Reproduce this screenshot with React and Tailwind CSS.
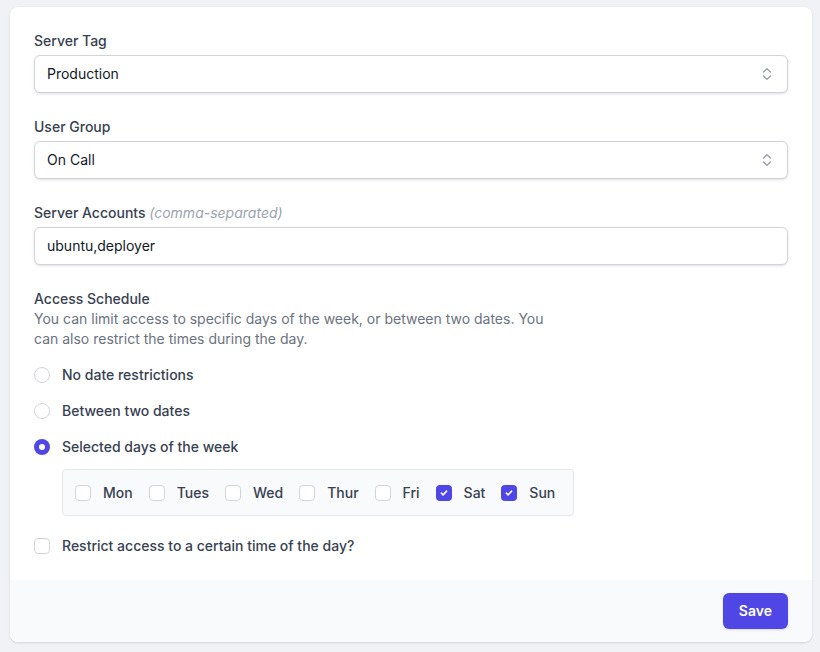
import { useState } from "react";

const DAYS = [
  { name: "Mon", on: false },
  { name: "Tues", on: false },
  { name: "Wed", on: false },
  { name: "Thur", on: false },
  { name: "Fri", on: false },
  { name: "Sat", on: true },
  { name: "Sun", on: true },
];

function UpDown() {
  return (
    <svg viewBox="0 0 20 20" className="h-5 w-5 text-[#9ca3af]" fill="none" stroke="currentColor" strokeWidth="1.5" strokeLinecap="round" strokeLinejoin="round">
      <path d="M6.5 8 10 4.75 13.5 8" />
      <path d="M6.5 12 10 15.25 13.5 12" />
    </svg>
  );
}

function Checkbox({ checked }) {
  return checked ? (
    <span className="flex h-4 w-4 items-center justify-center rounded-[4px] bg-[#4f46e5]">
      <svg viewBox="0 0 16 16" className="h-3 w-3" fill="none" stroke="white" strokeWidth="2" strokeLinecap="round" strokeLinejoin="round">
        <path d="M4.5 8.2 6.8 10.5 11.5 5.5" />
      </svg>
    </span>
  ) : (
    <span className="block h-4 w-4 rounded-[4px] border border-[#d1d5db] bg-white" />
  );
}

function Radio({ checked }) {
  return checked ? (
    <span className="flex h-4 w-4 items-center justify-center rounded-full bg-[#4f46e5]">
      <span className="h-1.5 w-1.5 rounded-full bg-white" />
    </span>
  ) : (
    <span className="block h-4 w-4 rounded-full border border-[#d1d5db] bg-white" />
  );
}

function SelectBox({ value }) {
  return (
    <div className="mt-1 flex h-[38px] items-center justify-between rounded-md border border-[#d1d5db] bg-white pl-3 pr-2.5 shadow-sm">
      <span className="text-sm text-[#111827]">{value}</span>
      <UpDown />
    </div>
  );
}

export default function App() {
  const [mode] = useState("days");

  return (
    <div className="min-h-[652px] bg-[#f1f2f5] pt-[7px] pb-[10px]" style={{ fontFamily: "Inter, 'Noto Sans', sans-serif" }}>
      <div className="ml-[10px] w-[802px] overflow-hidden rounded-lg bg-white shadow">
        <div className="px-6 pt-6 pb-6">
          {/* Server tag */}
          <div>
            <label className="block text-sm font-medium leading-5 text-[#374151]">Server Tag</label>
            <SelectBox value="Production" />
          </div>

          {/* User group */}
          <div className="mt-6">
            <label className="block text-sm font-medium leading-5 text-[#374151]">User Group</label>
            <SelectBox value="On Call" />
          </div>

          {/* Accounts */}
          <div className="mt-6">
            <label className="block text-sm font-medium leading-5 text-[#374151]">
              Server Accounts <span className="font-normal italic text-[#9ca3af]">(comma-separated)</span>
            </label>
            <div className="mt-1 flex h-[38px] items-center rounded-md border border-[#d1d5db] bg-white px-3 shadow-sm">
              <span className="text-sm text-[#111827]">ubuntu,deployer</span>
            </div>
          </div>

          {/* Schedule */}
          <div className="mt-6">
            <div className="text-sm font-medium leading-5 text-[#374151]">Access Schedule</div>
            <p className="w-[520px] text-sm leading-5 text-[#6b7280]">
              You can limit access to specific days of the week, or between two dates. You can also restrict the times during the day.
            </p>

            <div className="mt-4 flex flex-col gap-4">
              <div className="flex items-center gap-3 text-sm font-medium leading-5 text-[#374151]">
                <Radio checked={mode === "none"} />
                <span>No date restrictions</span>
              </div>
              <div className="flex items-center gap-3 text-sm font-medium leading-5 text-[#374151]">
                <Radio checked={mode === "dates"} />
                <span>Between two dates</span>
              </div>
              <div className="flex items-center gap-3 text-sm font-medium leading-5 text-[#374151]">
                <Radio checked={mode === "days"} />
                <span>Selected days of the week</span>
              </div>
            </div>

            <div className="ml-7 mt-3 inline-flex h-[47px] items-center gap-4 rounded-[4px] border border-[#e5e7eb] bg-[#f9fafb] pl-3 pr-[18px]">
              {DAYS.map((d) => (
                <div key={d.name} className="flex items-center gap-3 text-sm font-medium leading-5 text-[#374151]">
                  <Checkbox checked={d.on} />
                  <span>{d.name}</span>
                </div>
              ))}
            </div>

            <div className="mt-5 flex items-center gap-3 text-sm font-medium leading-5 text-[#374151]">
              <Checkbox checked={false} />
              <span>Restrict access to a certain time of the day?</span>
            </div>
          </div>
        </div>

        {/* Footer */}
        <div className="flex justify-end bg-[#f9fafb] px-6 py-[13px]">
          <button className="h-9 rounded-md bg-[#4f46e5] px-4 text-sm font-semibold text-white shadow-sm">Save</button>
        </div>
      </div>
    </div>
  );
}
